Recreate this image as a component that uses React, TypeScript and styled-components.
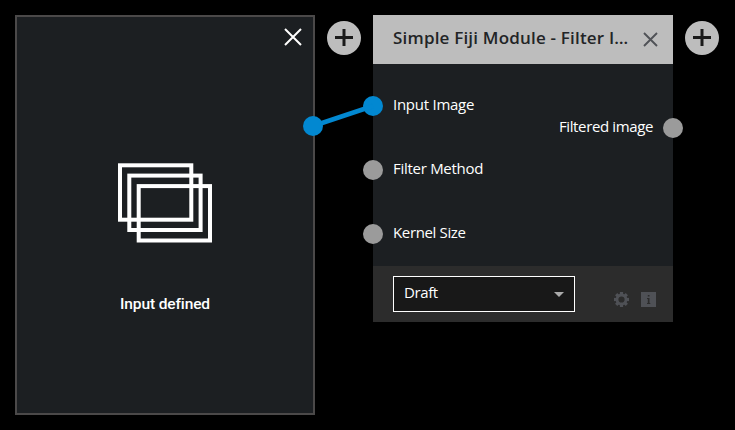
import React from "react";
import styled, { createGlobalStyle } from "styled-components";

const GlobalStyle = createGlobalStyle`
  * { box-sizing: border-box; }
  html, body { margin: 0; background: #000; overflow: hidden; }
  body { font-family: "Open Sans", "Noto Sans", sans-serif; font-size: 15px; color: #fff; }
`;

const Canvas = styled.main`
  position: relative;
  display: flex;
  align-items: flex-start;
  gap: 12px;
  width: 735px;
  height: 430px;
  padding: 15px;
  background: #000;
`;

const InputCard = styled.section`
  display: flex;
  flex-direction: column;
  align-items: center;
  flex: none;
  width: 300px;
  height: 400px;
  border: 2px solid #4b4949;
  background: #1c1f22;
`;

const CardTop = styled.div`
  display: flex;
  justify-content: flex-end;
  width: 100%;
  height: 146px;
  padding: 11px 11px 0 0;
`;

const CardCaption = styled.div`
  margin-top: 49px;
  font: 500 15.5px/20px Roboto, sans-serif;
  letter-spacing: -0.12px;
  white-space: nowrap;
`;

const IconButton = styled.button<{ $size: number }>`
  flex: none;
  width: ${(p) => p.$size}px;
  height: ${(p) => p.$size}px;
  padding: 0;
  border: 0;
  background: none;
  color: inherit;
  svg { display: block; }
`;

const AddButton = styled.button`
  display: grid;
  place-items: center;
  flex: none;
  width: 34px;
  height: 34px;
  margin-top: 6px;
  padding: 0;
  border: 0;
  border-radius: 50%;
  background: #bdbdbd;
  color: #1a1a1a;
`;

const Module = styled.section`
  flex: none;
  width: 300px;
`;

const ModuleHeader = styled.header`
  display: flex;
  align-items: center;
  justify-content: space-between;
  height: 49px;
  padding: 0 15px 0 20px;
  background: #bdbdbd;
  color: #505257;
`;

const Title = styled.h1`
  margin: -3px 0 0;
  font: 600 17px/24px "Open Sans", sans-serif;
  letter-spacing: 0.19px;
  color: #222426;
  white-space: nowrap;
`;

const ModuleBody = styled.div`
  display: flex;
  justify-content: space-between;
  height: 202px;
  background: #1c1f22;
`;

const Ports = styled.div<{ $side: "in" | "out" }>`
  padding-top: ${(p) => (p.$side === "in" ? 10 : 32)}px;
  margin: ${(p) => (p.$side === "in" ? "0 0 0 -10px" : "0 -10px 0 0")};
`;

const PortRow = styled.div`
  display: flex;
  align-items: center;
  gap: 10px;
  height: 64px;
`;

const PortDot = styled.span<{ $linked?: boolean }>`
  flex: none;
  width: 20px;
  height: 20px;
  border-radius: 50%;
  background: ${(p) => (p.$linked ? "#0288d1" : "#9b9b9b")};
`;

const Label = styled.span<{ $tracking: number }>`
  margin-top: -4px;
  font-size: 15px;
  line-height: 20px;
  letter-spacing: ${(p) => p.$tracking}px;
  white-space: nowrap;
`;

const ModuleFooter = styled.footer`
  display: flex;
  align-items: center;
  height: 56px;
  padding: 0 17px 0 20px;
  background: #2c2c2c;
`;

const Select = styled.div`
  display: flex;
  align-items: center;
  justify-content: space-between;
  width: 182px;
  height: 36px;
  padding: 0 10px;
  border: 1px solid #fff;
  background: #181818;
`;

const FooterIcons = styled.div`
  display: flex;
  gap: 12px;
  margin: 11px 0 0 auto;
  color: #4f5156;
  svg { display: block; }
`;

const LinkLayer = styled.svg`
  position: absolute;
  inset: 0;
  pointer-events: none;
`;

const Cross = ({ size, stroke }: { size: number; stroke: number }) => (
  <svg width={size} height={size} viewBox={`0 0 ${size} ${size}`}>
    <path
      d={`M1 1L${size - 1} ${size - 1}M${size - 1} 1L1 ${size - 1}`}
      stroke="currentColor"
      strokeWidth={stroke}
    />
  </svg>
);

const Plus = () => (
  <svg width="18" height="18" viewBox="0 0 18 18">
    <path d="M9 0v17M0 8.5h18" stroke="currentColor" strokeWidth="3" />
  </svg>
);

const FramesIcon = () => (
  <svg width="96" height="82" viewBox="0 0 96 82" fill="none" stroke="#fff" strokeWidth="4">
    <rect x="3" y="2.3" width="71.3" height="54.4" />
    <rect x="12.3" y="12.6" width="71.3" height="54.4" />
    <rect x="21.7" y="23.1" width="71.3" height="54.4" />
  </svg>
);

const TEETH = [0, 45, 90, 135, 180, 225, 270, 315];

const Gear = () => (
  <svg width="15" height="15" viewBox="0 0 15 15">
    <circle cx="7.5" cy="7.5" r="4.5" fill="none" stroke="currentColor" strokeWidth="2.8" />
    {TEETH.map((a) => (
      <rect key={a} x="5.9" y="0" width="3.2" height="3" fill="currentColor" transform={`rotate(${a} 7.5 7.5)`} />
    ))}
  </svg>
);

const Info = () => (
  <svg width="15" height="15" viewBox="0 0 15 15">
    <path d="M0 0h15v15H0z" fill="currentColor" />
    <path d="M6.8 3h1.7v1.6H6.8zM6 6h2.5v5h.8v.9H6V11h.8V6.9H6z" fill="#2c2c2c" />
  </svg>
);

const INPUTS = [
  { name: "Input Image", linked: true, tracking: -0.26 },
  { name: "Filter Method", linked: false, tracking: -0.28 },
  { name: "Kernel Size", linked: false, tracking: -0.36 },
];

export default function App() {
  return (
    <>
      <GlobalStyle />
      <Canvas>
        <InputCard>
          <CardTop>
            <IconButton $size={18} aria-label="Close">
              <Cross size={18} stroke={2} />
            </IconButton>
          </CardTop>
          <FramesIcon />
          <CardCaption>Input defined</CardCaption>
        </InputCard>
        <AddButton aria-label="Add"><Plus /></AddButton>
        <Module>
          <ModuleHeader>
            <Title>Simple Fiji Module - Filter I…</Title>
            <IconButton $size={15} aria-label="Close">
              <Cross size={15} stroke={1.9} />
            </IconButton>
          </ModuleHeader>
          <ModuleBody>
            <Ports $side="in">
              {INPUTS.map((p) => (
                <PortRow key={p.name}>
                  <PortDot $linked={p.linked} />
                  <Label $tracking={p.tracking}>{p.name}</Label>
                </PortRow>
              ))}
            </Ports>
            <Ports $side="out">
              <PortRow>
                <Label $tracking={-0.37}>Filtered image</Label>
                <PortDot />
              </PortRow>
            </Ports>
          </ModuleBody>
          <ModuleFooter>
            <Select>
              <Label $tracking={-0.4}>Draft</Label>
              <svg width="10" height="5" viewBox="0 0 10 5">
                <path d="M0 0h10L5 5z" fill="#aaa" />
              </svg>
            </Select>
            <FooterIcons>
              <Gear />
              <Info />
            </FooterIcons>
          </ModuleFooter>
        </Module>
        <AddButton aria-label="Add"><Plus /></AddButton>
        <LinkLayer width="735" height="430">
          <path d="M313 126L373 106" stroke="#0288d1" strokeWidth="4.6" />
          <circle cx="313" cy="126" r="10" fill="#0288d1" />
        </LinkLayer>
      </Canvas>
    </>
  );
}
